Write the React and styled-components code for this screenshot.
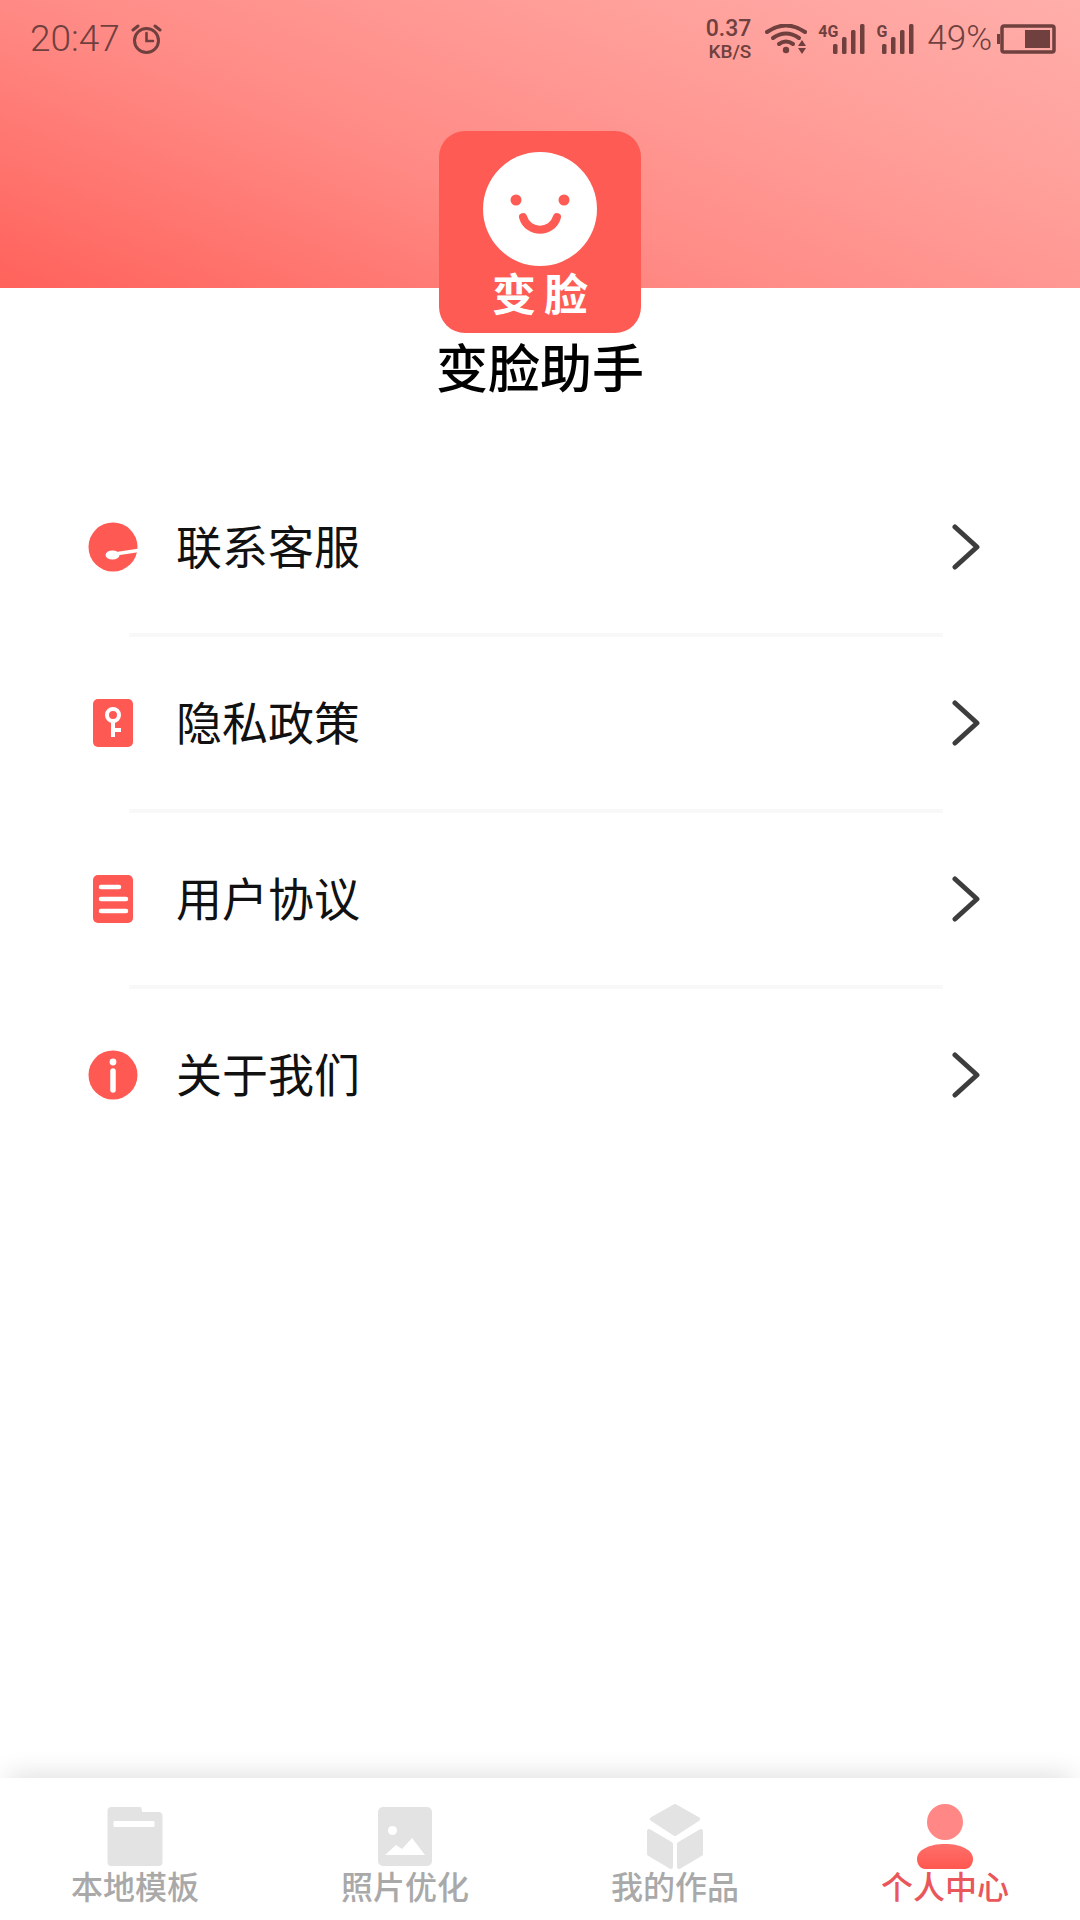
import React from "react";
import styled, { createGlobalStyle } from "styled-components";

const GlobalStyle = createGlobalStyle`
  html, body { margin: 0; padding: 0; background: #fff; }
  * { box-sizing: border-box; }
  body { font-family: "Noto Sans CJK SC", "Noto Sans", sans-serif; }
`;

const Page = styled.div`
  width: 1080px;
  height: 1920px;
  display: flex;
  flex-direction: column;
  background: #fff;
  overflow: hidden;
`;

const Header = styled.header`
  height: 288px;
  flex: none;
  background: linear-gradient(22deg, #ff625b 0%, #ff8a85 40%, #ff9f9a 72%, #ffaeaa 100%);
`;

const StatusBar = styled.div`
  height: 78px;
  padding: 0 24px 0 30px;
  display: flex;
  align-items: center;
  justify-content: space-between;
  color: #6f403e;
  font-family: Roboto, "Liberation Sans", sans-serif;
`;

const StatusLeft = styled.div`
  display: flex;
  align-items: center;
  gap: 11px;
`;

const StatusRight = styled.div`
  display: flex;
  align-items: center;
`;

const Clock = styled.span`
  font-size: 37px;
  font-weight: 300;
  line-height: 40px;
  color: #6f403e;
`;

const Percent = styled(Clock)`
  margin-left: 13px;
  font-size: 35px;
`;

const Speed = styled.div`
  display: flex;
  flex-direction: column;
  align-items: flex-end;
  gap: 1px;
  font-weight: 500;
`;

const SpeedValue = styled.span`
  font-size: 23px;
  line-height: 24px;
`;

const SpeedUnit = styled.span`
  font-size: 19px;
  line-height: 20px;
`;

const Network = styled.div`
  display: flex;
  align-items: flex-start;
  margin-left: 11px;
`;

const NetworkLabel = styled.span`
  font-size: 16px;
  line-height: 16px;
  font-weight: 700;
  margin-right: -5px;
`;

const WifiIcon = styled.svg`
  margin-left: 14px;
`;

const BatteryIcon = styled.svg`
  margin-left: 5px;
`;

const Main = styled.main`
  flex: 1;
  display: flex;
  flex-direction: column;
`;

const Brand = styled.section`
  margin-top: -157px;
  display: flex;
  flex-direction: column;
  align-items: center;
`;

const Logo = styled.div`
  width: 202px;
  height: 202px;
  padding-top: 21px;
  border-radius: 26px;
  background: #fe5b54;
  display: flex;
  flex-direction: column;
  align-items: center;
`;

const LogoLabel = styled.span`
  padding-left: 8px;
  color: #fff;
  font-size: 44px;
  line-height: 52px;
  font-weight: 700;
  letter-spacing: 8px;
`;

const AppName = styled.h1`
  margin: -2px 0 2px;
  color: #000;
  font-size: 52px;
  line-height: 70px;
  font-weight: 500;
`;

const Menu = styled.nav`
  margin-top: 58px;
  display: flex;
  flex-direction: column;
`;

const MenuRow = styled.div`
  height: 172px;
  padding: 0 100px 0 88px;
  display: flex;
  align-items: center;
`;

const MenuIcon = styled.svg`
  flex: none;
`;

const MenuLabel = styled.span`
  flex: 1;
  margin: -6px 0 0 38px;
  color: #111;
  font-size: 46px;
  line-height: 60px;
  font-weight: 400;
`;

const Divider = styled.hr`
  height: 4px;
  margin: 0 137px 0 129px;
  border: 0;
  background: #f9f8f9;
`;

const TabBar = styled.footer`
  height: 142px;
  flex: none;
  display: grid;
  grid-template-columns: repeat(4, 270px);
  background: #fff;
  box-shadow: 0 -12px 24px -8px rgba(0, 0, 0, 0.12);
  position: relative;
`;

const Tab = styled.div`
  padding-top: 26px;
  display: flex;
  flex-direction: column;
  align-items: center;
`;

const TabLabel = styled.span`
  margin-top: -2px;
  color: ${(p) => (p.$active ? "#e9575b" : "#a9a9a9")};
  font-size: 32px;
  line-height: 36px;
  font-weight: 500;
`;

const Chevron = () => (
  <svg width="28" height="46" viewBox="0 0 28 46">
    <path d="M3 3 L25 23 L3 43" fill="none" stroke="#3d3d3d" strokeWidth="5" strokeLinecap="round" strokeLinejoin="round" />
  </svg>
);

const SupportIcon = () => (
  <MenuIcon width="50" height="50" viewBox="0 0 50 50">
    <circle cx="25" cy="25" r="24.5" fill="#fe5a53" />
    <path d="M50 28.5 L30 31.5" stroke="#fff" strokeWidth="3.5" />
    <ellipse cx="24.5" cy="33" rx="7" ry="4.5" fill="#fff" />
  </MenuIcon>
);

const PrivacyIcon = () => (
  <MenuIcon width="50" height="50" viewBox="0 0 50 50">
    <rect x="5" y="1" width="40" height="48" rx="5" fill="#fe5a53" />
    <circle cx="25" cy="17" r="6" fill="none" stroke="#fff" strokeWidth="4" />
    <path d="M25 23 V39 M25 32 H33" fill="none" stroke="#fff" strokeWidth="4" />
  </MenuIcon>
);

const AgreementIcon = () => (
  <MenuIcon width="50" height="50" viewBox="0 0 50 50">
    <rect x="5" y="1" width="40" height="48" rx="5" fill="#fe5a53" />
    <path d="M13 13 H31 M13 25 H38 M13 37 H38" stroke="#fff" strokeWidth="4.5" strokeLinecap="round" />
  </MenuIcon>
);

const AboutIcon = () => (
  <MenuIcon width="50" height="50" viewBox="0 0 50 50">
    <circle cx="25" cy="25" r="24.5" fill="#fe5a53" />
    <circle cx="25" cy="12" r="3.4" fill="#fff" />
    <path d="M25 21 V40" stroke="#fff" strokeWidth="5.5" strokeLinecap="round" />
  </MenuIcon>
);

const FolderGlyph = () => (
  <svg width="60" height="65" viewBox="0 0 60 65">
    <path d="M2.5 7 Q2.5 3 6.5 3 H35 Q37 3 37 8 H53.5 Q57.5 8 57.5 12 V58 Q57.5 62 53.5 62 H6.5 Q2.5 62 2.5 58 Z" fill="#e3e3e3" />
    <rect x="8.5" y="17" width="41" height="6" rx="1" fill="#fff" />
  </svg>
);

const PhotoGlyph = () => (
  <svg width="60" height="65" viewBox="0 0 60 65">
    <rect x="3" y="3" width="54" height="59" rx="5" fill="#e3e3e3" />
    <circle cx="17.5" cy="26.5" r="4.5" fill="#fff" />
    <path d="M10 51 L21 41 L27 45 L37 34 L50 51 Z" fill="#fff" />
  </svg>
);

const CubeGlyph = () => (
  <svg width="60" height="65" viewBox="0 0 60 65">
    <g fill="#e3e3e3" stroke="#e3e3e3" strokeWidth="4" strokeLinejoin="round">
      <path d="M30 2 L53 15 L30 30 L7 15 Z" />
      <path d="M4 27 L26 40 L26 63 L4 50 Z" />
      <path d="M56 27 L34 40 L34 63 L56 50 Z" />
    </g>
  </svg>
);

const PersonGlyph = () => (
  <svg width="60" height="65" viewBox="0 0 60 65">
    <defs>
      <linearGradient id="bodyFill" x1="0" y1="0" x2="0" y2="1">
        <stop offset="0" stopColor="#ff6f6a" />
        <stop offset="1" stopColor="#ff5850" />
      </linearGradient>
    </defs>
    <circle cx="30" cy="18" r="18" fill="#ff8785" />
    <path d="M2 55 C2 46 14 40 30 40 C46 40 58 46 58 55 C58 61 54 65 50 65 H10 C6 65 2 61 2 55 Z" fill="url(#bodyFill)" />
  </svg>
);

const Bars = () => (
  <svg width="32" height="30" viewBox="0 0 32 30">
    <g fill="#6f403e">
      <rect x="0" y="20" width="4.5" height="10" rx="1.5" />
      <rect x="9" y="13" width="4.5" height="17" rx="1.5" />
      <rect x="18" y="6" width="4.5" height="24" rx="1.5" />
      <rect x="27" y="0" width="4.5" height="30" rx="1.5" />
    </g>
  </svg>
);

const menuItems = [
  { label: "联系客服", Icon: SupportIcon },
  { label: "隐私政策", Icon: PrivacyIcon },
  { label: "用户协议", Icon: AgreementIcon },
  { label: "关于我们", Icon: AboutIcon },
];

const tabs = [
  { label: "本地模板", Glyph: FolderGlyph },
  { label: "照片优化", Glyph: PhotoGlyph },
  { label: "我的作品", Glyph: CubeGlyph },
  { label: "个人中心", Glyph: PersonGlyph, active: true },
];

export default function App() {
  return (
    <Page>
      <GlobalStyle />
      <Header>
        <StatusBar>
          <StatusLeft>
            <Clock>20:47</Clock>
            <svg width="31" height="30" viewBox="0 0 31 30">
              <g fill="none" stroke="#6f403e" strokeWidth="3" strokeLinecap="round">
                <circle cx="15.5" cy="16.5" r="12" />
                <path d="M15.5 9 V17 H22" strokeWidth="2.6" />
                <path d="M2 6 L7 2 M29 6 L24 2" />
              </g>
            </svg>
          </StatusLeft>
          <StatusRight>
            <Speed>
              <SpeedValue>0.37</SpeedValue>
              <SpeedUnit>KB/S</SpeedUnit>
            </Speed>
            <WifiIcon width="42" height="30" viewBox="0 0 42 30">
              <g fill="none" stroke="#6f403e" strokeWidth="4" strokeLinecap="round">
                <path d="M2 8 Q21 -5 40 8" />
                <path d="M8 14 Q21 5 34 14" />
                <path d="M14 20 Q21 15 28 20" />
              </g>
              <circle cx="21" cy="26" r="3.2" fill="#6f403e" />
              <path d="M33 22 L37 16 L41 22 Z M33 24 H41 L37 30 Z" fill="#6f403e" />
            </WifiIcon>
            <Network>
              <NetworkLabel>4G</NetworkLabel>
              <Bars />
            </Network>
            <Network>
              <NetworkLabel>G</NetworkLabel>
              <Bars />
            </Network>
            <Percent>49%</Percent>
            <BatteryIcon width="59" height="30" viewBox="0 0 59 30">
              <rect x="0" y="10" width="3" height="10" fill="#6f403e" />
              <rect x="5" y="2" width="52" height="26" rx="2" fill="none" stroke="#6f403e" strokeWidth="3.5" />
              <rect x="28" y="6" width="25" height="18" fill="#6f403e" />
            </BatteryIcon>
          </StatusRight>
        </StatusBar>
      </Header>

      <Main>
        <Brand>
          <Logo>
            <svg width="114" height="114" viewBox="0 0 114 114">
              <circle cx="57" cy="57" r="57" fill="#fff" />
              <circle cx="33" cy="48" r="5.5" fill="#fe5b54" />
              <circle cx="81" cy="48" r="5.5" fill="#fe5b54" />
              <path d="M40 65 C45 82 69 82 74 65" fill="none" stroke="#fe5b54" strokeWidth="8" strokeLinecap="round" />
            </svg>
            <LogoLabel>变脸</LogoLabel>
          </Logo>
          <AppName>变脸助手</AppName>
        </Brand>

        <Menu>
          {menuItems.map(({ label, Icon }, index) => (
            <React.Fragment key={label}>
              {index > 0 && <Divider />}
              <MenuRow>
                <Icon />
                <MenuLabel>{label}</MenuLabel>
                <Chevron />
              </MenuRow>
            </React.Fragment>
          ))}
        </Menu>
      </Main>

      <TabBar>
        {tabs.map(({ label, Glyph, active }) => (
          <Tab key={label}>
            <Glyph />
            <TabLabel $active={active}>{label}</TabLabel>
          </Tab>
        ))}
      </TabBar>
    </Page>
  );
}
